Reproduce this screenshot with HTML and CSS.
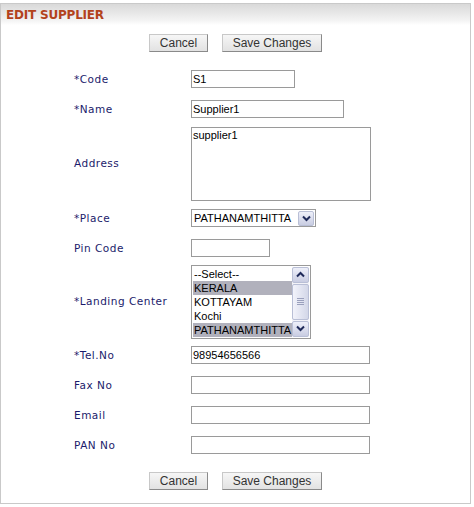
FILE: index.html
```html
<!DOCTYPE html>
<html>
<head>
<meta charset="utf-8">
<link rel="stylesheet" href="styles.css">
</head>
<body>
<div class="panel">
  <div class="header"><span class="title">EDIT SUPPLIER</span></div>
  <div class="btnrow top">
    <button class="btn cancel">Cancel</button>
    <button class="btn save">Save Changes</button>
  </div>
  <div class="form">
    <div class="row r30"><span class="label">*Code</span><span class="field w103">S1</span></div>
    <div class="row r30"><span class="label">*Name</span><span class="field w152">Supplier1</span></div>
    <div class="row r79"><span class="label">Address</span><span class="area">supplier1</span></div>
    <div class="row r30"><span class="label">*Place</span>
      <span class="select">
        <span class="seltext">PATHANAMTHITTA</span>
        <span class="arrowbtn"><svg width="9" height="7" viewBox="0 0 9 7"><path d="M1 1.5 L4.5 5 L8 1.5" fill="none" stroke="#1f2a5a" stroke-width="2"/></svg></span>
      </span>
    </div>
    <div class="row r30"><span class="label">Pin Code</span><span class="field w78"></span></div>
    <div class="row r77"><span class="label">*Landing Center</span>
      <span class="listbox">
        <span class="items">
          <span class="item">--Select--</span>
          <span class="item sel">KERALA</span>
          <span class="item">KOTTAYAM</span>
          <span class="item">Kochi</span>
          <span class="item sel">PATHANAMTHITTA</span>
        </span>
        <span class="scroll">
          <span class="sbtn"><svg width="9" height="7" viewBox="0 0 9 7"><path d="M1 5.5 L4.5 2 L8 5.5" fill="none" stroke="#1f2a5a" stroke-width="2"/></svg></span>
          <span class="track"><span class="thumb"><span class="grip"></span><span class="grip"></span><span class="grip"></span><span class="grip"></span></span></span>
          <span class="sbtn"><svg width="9" height="7" viewBox="0 0 9 7"><path d="M1 1.5 L4.5 5 L8 1.5" fill="none" stroke="#1f2a5a" stroke-width="2"/></svg></span>
        </span>
      </span>
    </div>
    <div class="row r30"><span class="label">*Tel.No</span><span class="field w178">98954656566</span></div>
    <div class="row r30"><span class="label">Fax No</span><span class="field w178"></span></div>
    <div class="row r30"><span class="label">Email</span><span class="field w178"></span></div>
    <div class="row r30"><span class="label">PAN No</span><span class="field w178"></span></div>
  </div>
  <div class="btnrow bottom">
    <button class="btn cancel">Cancel</button>
    <button class="btn save">Save Changes</button>
  </div>
</div>
</body>
</html>
```
FILE: styles.css
```css
html, body { margin: 0; padding: 0; background: #fff; }
.panel {
  margin-top: 3px;
  width: 469px;
  border: 1px solid #c9c9c9;
  background: #fff;
}
.header {
  height: 21px;
  background: linear-gradient(to bottom, #d9d9d9, #f4f4f4 80%, #ffffff);
  display: flex;
  align-items: center;
  padding-left: 5px;
}
.title {
  font-family: "DejaVu Sans", Verdana, sans-serif;
  font-weight: bold;
  font-size: 12px;
  color: #b3421c;
  letter-spacing: -0.2px;
  padding-top: 1px;
}
.btnrow {
  display: flex;
  justify-content: center;
  gap: 14px;
}
.btnrow.top { padding-top: 9px; padding-bottom: 12px; }
.btnrow.bottom { padding-top: 12px; padding-bottom: 13px; }
.btn {
  height: 18px;
  margin: 0;
  padding: 0;
  font-family: "Liberation Sans", Arial, sans-serif;
  font-size: 12px;
  color: #333;
  background: linear-gradient(to bottom, #f6f6f6, #e2e2e2);
  border: 1px solid;
  border-color: #c8c8c8 #8a8a8a #8a8a8a #c8c8c8;
  line-height: 16px;
}
.btn.cancel { width: 59px; }
.btn.save { width: 100px; }
.form {
  padding-left: 73px;
}
.row {
  display: grid;
  grid-template-columns: 117px auto;
  align-items: center;
}
.r30 { height: 30px; }
.r79 { height: 79px; }
.r77 { height: 77px; }
.label {
  font-family: "DejaVu Sans", Verdana, sans-serif;
  font-size: 10.5px;
  letter-spacing: 0.5px;
  color: #1b1b6b;
  margin-top: -1px;
}
.field, .area, .select, .listbox {
  box-sizing: border-box;
  border: 1px solid #9a9a9a;
  font-family: "Liberation Sans", Tahoma, Arial, sans-serif;
  font-size: 11px;
  color: #000;
  background: #fff;
}
.field {
  height: 18px;
  line-height: 16px;
  padding-left: 1px;
  display: block;
}
.w103 { width: 104px; }
.w152 { width: 153px; }
.w78 { width: 79px; }
.w178 { width: 179px; }
.area {
  display: block;
  width: 180px;
  height: 74px;
  padding: 1px 1px;
  line-height: 13px;
}
.select {
  display: flex;
  align-items: center;
  justify-content: space-between;
  width: 125px;
  height: 18px;
  padding: 0 1px 0 2px;
}
.seltext { line-height: 16px; font-size: 11px; }
.arrowbtn, .sbtn {
  box-sizing: border-box;
  width: 16px;
  height: 15px;
  display: flex;
  align-items: center;
  justify-content: center;
  border: 1px solid #b9bfd6;
  border-radius: 2px;
  background: linear-gradient(to bottom, #eef0fa, #c9cde2);
}
.listbox {
  display: flex;
  width: 120px;
  height: 74px;
  padding: 1px;
}
.items {
  flex: 1;
  display: flex;
  flex-direction: column;
}
.item {
  height: 14px;
  line-height: 14px;
  padding-left: 1px;
  font-size: 11px;
}
.item.sel { background: #b1b1bc; }
.scroll {
  width: 17px;
  display: flex;
  flex-direction: column;
  background: #f3f3f8;
}
.scroll .sbtn { width: 17px; height: 16px; }
.track {
  flex: 1;
  display: flex;
  padding: 1px 0;
}
.thumb {
  box-sizing: border-box;
  width: 17px;
  height: 36px;
  border: 1px solid #b9bfd6;
  border-radius: 2px;
  background: linear-gradient(to right, #f2f3fb, #d3d7e8);
  display: flex;
  flex-direction: column;
  align-items: center;
  justify-content: center;
  gap: 1px;
}
.grip {
  width: 7px;
  height: 1px;
  background: #9aa0bd;
}
```
